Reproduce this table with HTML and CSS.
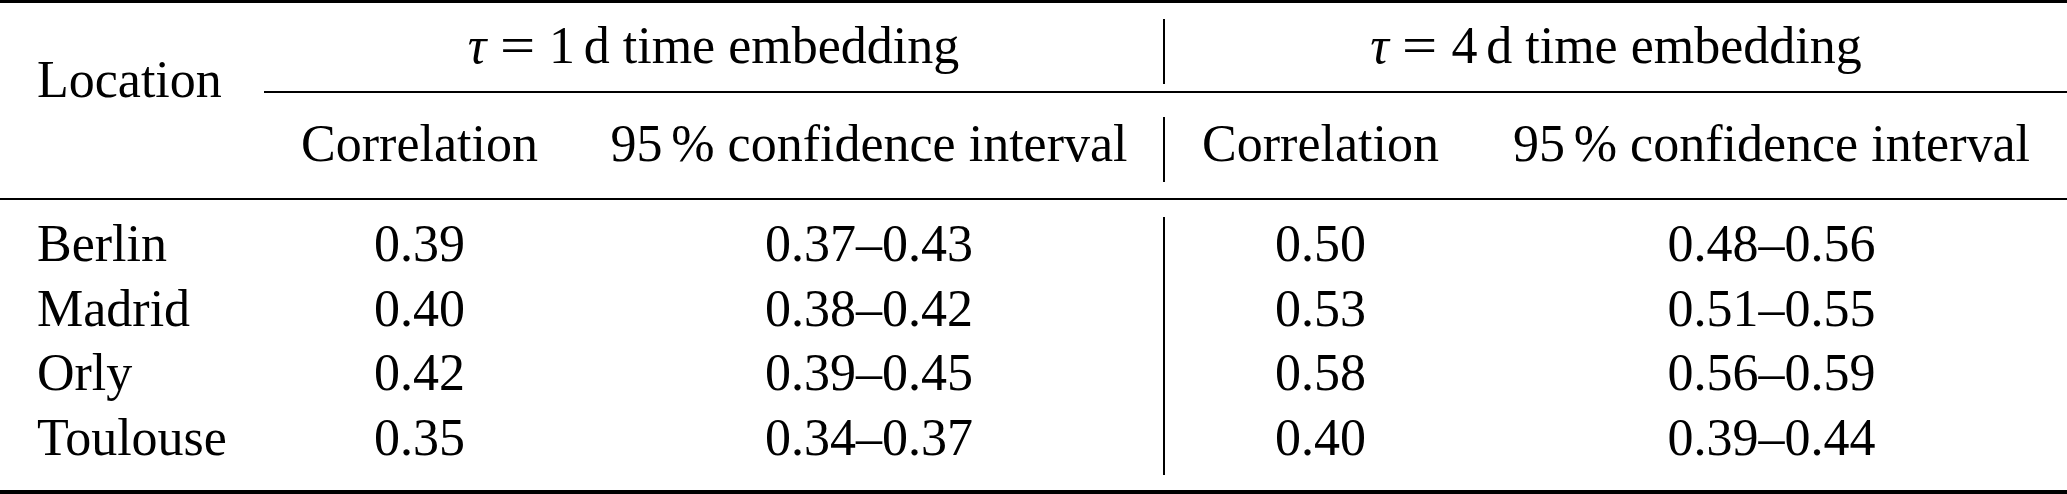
FILE: index.html
```html
<!DOCTYPE html>
<html lang="en">
<head>
<meta charset="utf-8">
<title>Correlation table</title>
<link rel="stylesheet" href="styles.css">
</head>
<body>
<div class="tbl">
  <div class="rule rule-top"></div>
  <div class="head">
    <div class="cell loc">Location</div>
    <div class="cell span-a"><i>τ</i><span class="rel">=</span>1<span class="thin"></span>d time embedding</div>
    <div class="cell span-b sep"><i>τ</i><span class="rel">=</span>4<span class="thin"></span>d time embedding</div>
    <div class="cmid"></div>
    <div class="cell r3 c1">Correlation</div>
    <div class="cell r3 c2">95<span class="thin"></span>% confidence interval</div>
    <div class="cell r3 c3 sep">Correlation</div>
    <div class="cell r3 c4">95<span class="thin"></span>% confidence interval</div>
  </div>
  <div class="rule rule-mid"></div>
  <div class="body">
    <div class="cell name">Berlin</div>
    <div class="cell">0.39</div>
    <div class="cell">0.37–0.43</div>
    <div class="cell sep">0.50</div>
    <div class="cell">0.48–0.56</div>

    <div class="cell name">Madrid</div>
    <div class="cell">0.40</div>
    <div class="cell">0.38–0.42</div>
    <div class="cell sep">0.53</div>
    <div class="cell">0.51–0.55</div>

    <div class="cell name">Orly</div>
    <div class="cell">0.42</div>
    <div class="cell">0.39–0.45</div>
    <div class="cell sep">0.58</div>
    <div class="cell">0.56–0.59</div>

    <div class="cell name">Toulouse</div>
    <div class="cell">0.35</div>
    <div class="cell">0.34–0.37</div>
    <div class="cell sep">0.40</div>
    <div class="cell">0.39–0.44</div>
  </div>
  <div class="rule rule-bottom"></div>
</div>
</body>
</html>
```
FILE: styles.css
```css
html, body {
  margin: 0;
  padding: 0;
  background: #fff;
}

.tbl {
  width: 2067px;
  font-family: "Liberation Serif", "Times New Roman", serif;
  font-size: 52px;
  color: #000;
}

.rule {
  background: #000;
}
.rule-top {
  height: 3px;
}
.rule-mid {
  height: 2px;
}
.rule-bottom {
  height: 4px;
}

.head,
.body {
  display: grid;
  grid-template-columns: 264px 311px 588px 313px 591px;
}

.head {
  padding: 16px 0;
}

.body {
  padding: 17px 0 15px;
  grid-auto-rows: 64.5px;
}

.cell {
  line-height: 54px;
  padding-bottom: 10.5px;
  text-align: center;
  white-space: nowrap;
  box-sizing: border-box;
}

.head .loc {
  grid-column: 1;
  grid-row: 1 / 4;
  text-align: left;
  padding: 33.5px 0 0 37px;
}

.span-a {
  grid-column: 2 / 4;
  grid-row: 1;
}
.span-b {
  grid-column: 4 / 6;
  grid-row: 1;
}

.cmid {
  grid-column: 2 / 6;
  grid-row: 2;
  height: 2px;
  background: #000;
  margin: 7.5px 0 24px;
}

.r3 {
  grid-row: 3;
  padding-bottom: 11px;
}
.c1 { grid-column: 2; }
.c2 { grid-column: 3; }
.c3 { grid-column: 4; }
.c4 { grid-column: 5; }

.sep {
  border-left: 2px solid #000;
}

.name {
  text-align: left;
  padding-left: 37px;
}

.rel {
  display: inline-block;
  margin: 0 0.32em;
  transform: scaleX(1.2);
}

.thin {
  display: inline-block;
  width: 0.17em;
}
```
